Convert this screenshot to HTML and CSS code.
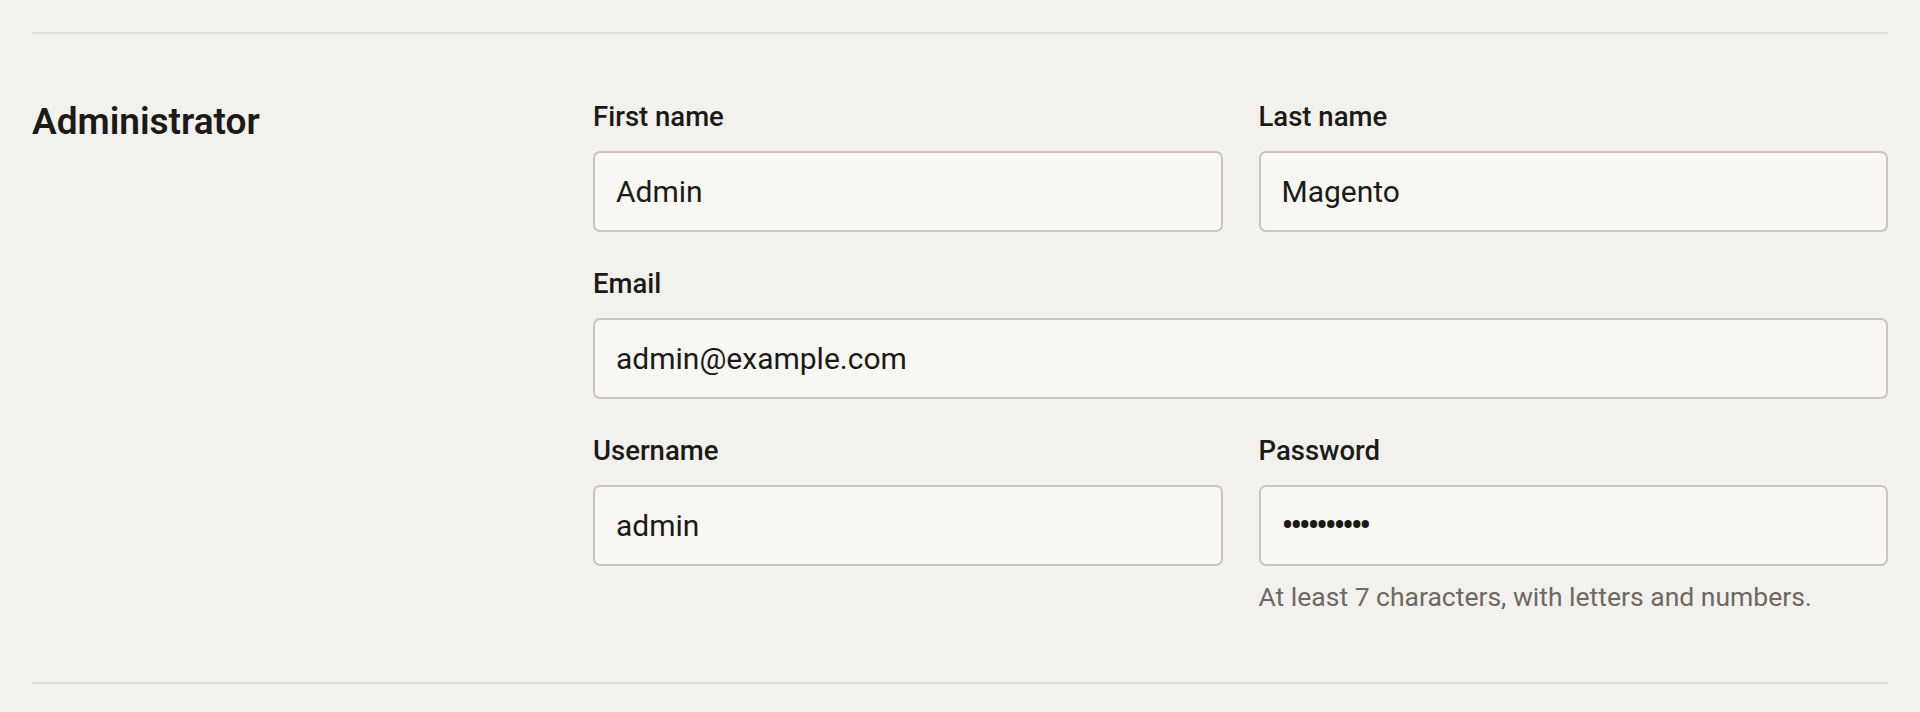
FILE: index.html
```html
<!DOCTYPE html>
<html lang="en">
<head>
    <meta charset="UTF-8">
    <title>Administrator</title>
<link rel="stylesheet" href="styles.css">
</head>
<body>
    <div class="page">
        <section class="section">
            <h2 class="section-title">Administrator</h2>

            <form class="fields" id="admin_form">
                <div class="field">
                    <label class="label" for="first_name">First name</label>
                    <input class="input" type="text" id="first_name" value="Admin">
                </div>

                <div class="field">
                    <label class="label" for="last_name">Last name</label>
                    <input class="input" type="text" id="last_name" value="Magento">
                </div>

                <div class="field field-wide">
                    <label class="label" for="email">Email</label>
                    <input class="input" type="email" id="email" value="admin@example.com">
                </div>

                <div class="field">
                    <label class="label" for="username">Username</label>
                    <input class="input" type="text" id="username" value="admin">
                </div>

                <div class="field">
                    <label class="label" for="password">Password</label>
                    <input class="input input-password" type="password" id="password" value="admin12345">
                    <p class="hint">At least 7 characters, with letters and numbers.</p>
                </div>
            </form>
        </section>
    </div>
</body>
</html>
```

FILE: styles.css
```css
* {
    box-sizing: border-box;
}

body, input, button {
    font-family: Roboto, 'Liberation Sans', sans-serif;
}

body {
    margin: 0;
    color: #1c1a17;
    background-color: #f3f1ed;
}

.page {
    padding: 32px 32px 0;
}

.section {
    display: grid;
    grid-template-columns: 561px 1fr;
    border-top: 2px solid #e4ded8;
    border-bottom: 2px solid #e4ded8;
    padding: 66px 0 68px;
}

.section-title {
    margin: 0;
    font-size: 37px;
    line-height: 44px;
    font-weight: 600;
}

.fields {
    display: grid;
    grid-template-columns: 1fr 1fr;
    column-gap: 36px;
    row-gap: 35px;
    margin: 0;
}

.field-wide {
    grid-column: 1 / -1;
}

.label {
    display: block;
    margin-bottom: 17px;
    font-size: 27.5px;
    line-height: 34px;
    font-weight: 500;
}

.input {
    display: block;
    width: 100%;
    height: 81px;
    padding: 0 21px;
    border: 2px solid #cdc5bd;
    border-radius: 7px;
    background-color: #f8f7f4;
    color: #1c1a17;
    font-size: 30px;
    outline: none;
}

.input-password {
    font-size: 36px;
    letter-spacing: -3.5px;
}

.hint {
    margin: 14px 0 0;
    font-size: 26.5px;
    line-height: 34px;
    color: #6e6862;
}
```
